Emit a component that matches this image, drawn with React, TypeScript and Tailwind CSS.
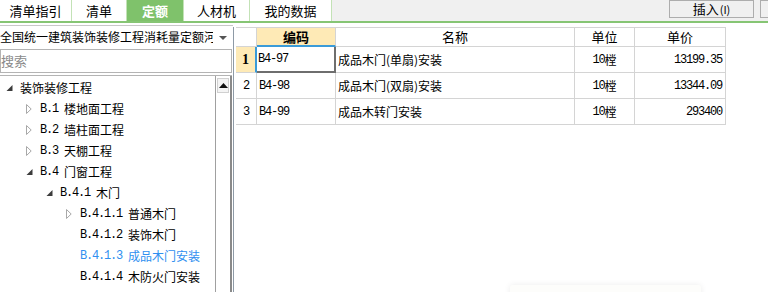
import React from "react";

type Node = { level: number; icon: "open" | "closed" | "none"; code: string; name: string; active?: boolean };

const tree: Node[] = [
  { level: 0, icon: "open", code: "", name: "装饰装修工程" },
  { level: 1, icon: "closed", code: "B.1", name: "楼地面工程" },
  { level: 1, icon: "closed", code: "B.2", name: "墙柱面工程" },
  { level: 1, icon: "closed", code: "B.3", name: "天棚工程" },
  { level: 1, icon: "open", code: "B.4", name: "门窗工程" },
  { level: 2, icon: "open", code: "B.4.1", name: "木门" },
  { level: 3, icon: "closed", code: "B.4.1.1", name: "普通木门" },
  { level: 3, icon: "none", code: "B.4.1.2", name: "装饰木门" },
  { level: 3, icon: "none", code: "B.4.1.3", name: "成品木门安装", active: true },
  { level: 3, icon: "none", code: "B.4.1.4", name: "木防火门安装" },
];

const rows = [
  { n: "1", code: "B4-97", name: "成品木门(单扇)安装", unit: "10", price: "13199.35" },
  { n: "2", code: "B4-98", name: "成品木门(双扇)安装", unit: "10", price: "13344.09" },
  { n: "3", code: "B4-99", name: "成品木转门安装", unit: "10", price: "293400" },
];

const MONO = "font-['Liberation_Mono',monospace] text-[12px] tracking-[-1.2px]";
const CJK = "font-['Noto_Sans_CJK_SC',sans-serif]";

function TreeIcon({ kind }: { kind: Node["icon"] }) {
  if (kind === "open")
    return (
      <svg width="7" height="6" viewBox="0 0 7 6" className="mt-[1px]">
        <polygon points="6.5,0 6.5,6 0.5,6" fill="#3c3c3c" />
      </svg>
    );
  if (kind === "closed")
    return (
      <svg width="6" height="10" viewBox="0 0 6 10">
        <polygon points="0.5,0.5 5.2,5 0.5,9.5" fill="white" stroke="#a8a8a8" strokeWidth="1" />
      </svg>
    );
  return null;
}

const tabs = [
  { label: "清单指引", w: "w-[72px]" },
  { label: "清单", w: "w-[55px]" },
  { label: "定额", w: "w-[57px]", active: true },
  { label: "人材机", w: "w-[66px]" },
  { label: "我的数据", w: "w-[82px]" },
];

export default function App() {
  return (
    <div className={`relative w-[768px] h-[292px] overflow-hidden bg-white text-black ${CJK}`}>
      {/* top tab bar */}
      <div className="flex h-[21px] bg-[#f0f0f0]">
        {tabs.map((t) => (
          <div
            key={t.label}
            className={`${t.w} flex items-center justify-center text-[13px] border-r border-[#c3e2b6] ${
              t.active ? "bg-[#7fc26b] text-white font-bold" : "bg-white"
            }`}
          >
            {t.label}
          </div>
        ))}
        <div className="flex-1" />
        <div className="w-[85px] h-[18px] border border-[#adadad] bg-[#f0f0f0] flex items-center justify-center text-[13px]">
          插入<span className="text-[11px] ml-[1px]">(I)</span>
        </div>
        <div className="w-[8px] ml-[6px] h-[18px] border-l border-t border-b border-[#adadad] bg-[#f0f0f0]" />
      </div>
      <div className="h-[2px] bg-[#86c574]" />

      {/* main */}
      <div className="flex h-[269px]">
        {/* left panel */}
        <div className="w-[233px] flex flex-col pt-[2px]">
          <div className="h-[22px] border-t border-[#c8c8c8] flex items-center relative">
            <div className="w-[213px] overflow-hidden whitespace-nowrap text-[12px] leading-none">
              全国统一建筑装饰装修工程消耗量定额河
            </div>
            <svg width="8" height="4" viewBox="0 0 8 4" className="absolute left-[219px] top-[10px]">
              <polygon points="0,0 8,0 4,4" fill="#555" />
            </svg>
          </div>
          <div className="mt-[2px] h-[24px] w-[232px] border border-[#b4b4b4] flex items-center text-[13px] text-[#8a8a8a]">
            搜索
          </div>
          <div className="mt-[2px] flex-1 w-[232px] border-t border-[#b4b4b4] flex">
            <div className="flex-1 pt-[1px]">
              {tree.map((n) => (
                <div
                  key={n.name}
                  className={`h-[21px] flex items-center ${n.active ? "text-[#2f8ff0]" : "text-black"}`}
                  style={{ paddingLeft: 6 + n.level * 20 }}
                >
                  <div className="w-[14px] flex items-center">
                    <TreeIcon kind={n.icon} />
                  </div>
                  {n.code && <span className={`${MONO} whitespace-pre`}>{n.code + " "}</span>}
                  <span className="text-[12px] leading-none">{n.name}</span>
                </div>
              ))}
            </div>
            <div className="w-[17px] border-l border-[#a0a0a0] border-r-2 border-r-[#8a8a8a] flex flex-col pt-[2px]">
              <div className="h-[15px] mx-[1px] border border-[#d0d0d0] bg-[#f4f4f4] flex items-center justify-center">
                <svg width="9" height="5" viewBox="0 0 9 5">
                  <polygon points="0,5 9,5 4.5,0" fill="#111" />
                </svg>
              </div>
            </div>
          </div>
        </div>

        {/* grid */}
        <div className="flex-1 pt-[4px]">
          <div className="border-l border-[#8e9aa6] h-full pl-[2px]">
            <div className="grid grid-cols-[21px_79px_239px_60px_91px] w-[490px]">
              {/* header */}
              <div className="h-[20px] border-t border-r border-b border-[#d4d4d4]" />
              <div className="h-[20px] bg-[#feeab6] border-t border-r border-[#d4d4d4] border-b-2 border-b-[#3a9bd8] flex items-center justify-center text-[13px] font-bold">
                编码
              </div>
              <div className="h-[20px] border-t border-r border-b border-[#d4d4d4] flex items-center justify-center text-[13px]">
                名称
              </div>
              <div className="h-[20px] border-t border-r border-b border-[#d4d4d4] flex items-center justify-center text-[13px]">
                单位
              </div>
              <div className="h-[20px] border-t border-r border-b border-[#d4d4d4] flex items-center justify-center text-[13px]">
                单价
              </div>
              {rows.map((r, i) => {
                const sel = i === 0;
                return (
                  <React.Fragment key={r.n}>
                    <div
                      className={`h-[26px] flex items-center justify-center border-b border-[#d4d4d4] ${
                        sel ? "bg-[#feeab6] border-r-2 border-r-[#3a9bd8]" : "border-r"
                      }`}
                    >
                      {sel ? (
                        <span className="font-['Liberation_Serif',serif] font-bold text-[14px]">1</span>
                      ) : (
                        <span className={MONO}>{r.n}</span>
                      )}
                    </div>
                    <div
                      className={`h-[26px] flex items-center pl-[1px] ${
                        sel ? "border-r-2 border-b-2 border-[#6e6e6e]" : "border-r border-b border-[#d4d4d4] pl-[2px]"
                      }`}
                    >
                      <span className={MONO}>{r.code}</span>
                    </div>
                    <div className="h-[26px] flex items-center pl-[2px] border-r border-b border-[#d4d4d4] text-[12px]">
                      {r.name}
                    </div>
                    <div className="h-[26px] flex items-center justify-center border-r border-b border-[#d4d4d4] text-[12px]">
                      <span className={MONO}>{r.unit}</span>
                      <span>樘</span>
                    </div>
                    <div className="h-[26px] flex items-center justify-end pr-[3px] border-r border-b border-[#d4d4d4]">
                      <span className={MONO}>{r.price}</span>
                    </div>
                  </React.Fragment>
                );
              })}
            </div>
          </div>
        </div>
      </div>

      {/* faint popup at bottom */}
      <div className="absolute left-[510px] top-[285px] w-[191px] h-[20px] bg-[#fdfdfb] rounded-[2px] shadow-[0_0_6px_rgba(0,0,0,0.08)]" />
    </div>
  );
}
